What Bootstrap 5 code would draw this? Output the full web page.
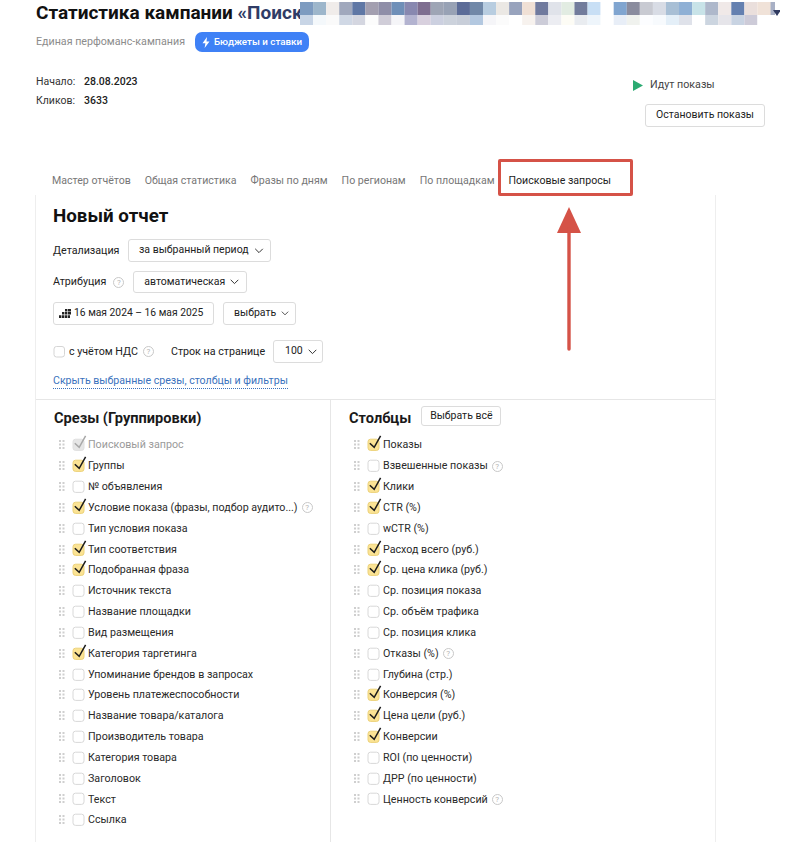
<!DOCTYPE html>
<html lang="ru">
<head>
<meta charset="utf-8">
<title>Статистика кампании</title>
<link rel="stylesheet" href="https://cdn.jsdelivr.net/npm/bootstrap@5.3.0/dist/css/bootstrap.min.css">
<style>
html,body{height:842px;overflow:hidden;background:#fff}
body{font-family:Roboto,"Liberation Sans",sans-serif;font-size:10.7px;color:#222;line-height:1.3}
.sheet{position:relative;width:810px;height:842px;overflow:hidden;padding-left:36px}
.camp-title{font-size:19px;font-weight:700;line-height:26px;height:26px;color:#111;white-space:nowrap;width:741px}
.camp-title .quoted{color:#2f3c66}
.mosaic{position:absolute;left:300px;top:0;width:480px;height:25px;display:block}
.sub-line{margin-top:6px;height:20px}
.sub-text{color:#8c8c8c;width:159px;font-size:10.7px}
.pill{background:#3f81f6;color:#fff;border:0;border-radius:7px;height:20px;width:114px;font-size:9.8px;font-weight:500;padding:0}
.pill:hover{background:#3f81f6;color:#fff}
.info-row{height:19px;line-height:19px;font-size:10.5px}
.info-key{width:48px;color:#333}
.info-val{font-weight:500;color:#222}
.head-zone{margin-top:20px;width:729px}
.status-line{margin-top:4px;height:18px;line-height:18px;color:#444;width:132px;gap:7px}
.ya-btn{background:#fff;border:1px solid #dcdcdc;border-radius:3px;color:#222;font-size:10.5px;line-height:1;padding:0;height:23px;display:inline-flex;align-items:center;justify-content:center;gap:5px;white-space:nowrap}
.ya-btn:hover{background:#fff;border-color:#dcdcdc;color:#222}
.chev{justify-content:flex-start;padding-left:10px}
.stop-btn{width:120px;margin-top:10px}
.tabbar{margin-top:45px;height:18px;line-height:18px;padding-left:16px;gap:14px;white-space:nowrap}
.tab-item{color:#777;font-size:10.6px}
.tab-on{position:relative;color:#222}
.tab-on::after{content:"";position:absolute;left:-11px;right:-22px;top:-13px;height:37px;border:3px solid #d55247;border-radius:2px}
.arrow-mark{position:absolute;left:552px;top:205px;overflow:visible}
.panel{margin-left:-1px;width:681px;height:651px;margin-top:5px;border-left:1px solid #eee;border-right:1px solid #eee}
.top-form{height:205px;padding:9px 0 0 17px;border-bottom:1px solid #e6e6e6}
.form-title{font-size:18.8px;font-weight:700;line-height:24px;margin:0;color:#111}
.r1{margin-top:11px}.r2{margin-top:9px}.r3{margin-top:9px}.r4{margin-top:15px}
.r1{gap:8px}.r2,.r3{gap:9px}
.w-det{width:143px}.w-atr{width:114px;height:22px}.w-date{width:161px;justify-content:flex-start;padding-left:5px;gap:3px;font-size:10.3px}.w-pick{width:73px}.w-num{width:50px;padding-left:11px}
.lbl-det{width:67px}
.lbl-atr{gap:7px}
.qmark{display:inline-block;width:11px;height:11px;border:1px solid #c8c8c8;border-radius:50%;color:#b5b5b5;font-size:8px;line-height:9px;text-align:center;flex:none}
.lbl-ndc{gap:5px;margin-right:17px}
.lbl-rows{margin-right:8px}
.hide-link{display:inline-block;margin-top:10px;line-height:15px;font-size:10.6px;color:#3a72bd;text-decoration:none;border-bottom:1px dotted #3a72bd}
.lower{height:445px}
.col-left{width:295px;border-right:1px solid #e6e6e6}
.col-right{width:384px}
.col-head{height:20px;margin-top:6px;padding-left:18px;gap:10px}
.col-title{font-size:14.6px;font-weight:700;color:#1a1a1a;margin:4px 0 0;line-height:20px}
.pick-all{width:80px;height:20px}
.items{margin:9px 0 0;padding:0 0 0 23px;list-style:none}
.items li{height:20.83px;display:flex;align-items:center;white-space:nowrap;color:#2a2a2a}
.items li.off-text{color:#9a9a9a}
.grip{width:13px;height:10px;flex:none}
.tick{width:16px;height:16px;flex:none;overflow:visible}
.items .qmark{margin-left:4px}
</style>
</head>
<body>
<svg width="0" height="0" class="d-none">
<symbol id="grip" viewBox="0 0 13 10"><g fill="#cfcfcf"><rect x="0" y="0" width="2" height="2"/><rect x="3.5" y="0" width="2" height="2"/><rect x="0" y="3.5" width="2" height="2"/><rect x="3.5" y="3.5" width="2" height="2"/><rect x="0" y="7" width="2" height="2"/><rect x="3.5" y="7" width="2" height="2"/></g></symbol>
</svg>
<div class="sheet">
  <div class="camp-title d-flex">
    <span>Статистика кампании <span class="quoted">«Поиск</span></span>
  </div>
  <svg class="mosaic" viewBox="0 0 480 25" aria-hidden="true">
    <g id="m1"></g>
    <path d="M473 10h8l-4 6z" fill="#2f3a60"/>
  </svg>
  <div class="sub-line d-flex align-items-center">
    <span class="sub-text">Единая перфоманс-кампания</span>
    <button class="pill btn d-inline-flex align-items-center justify-content-center gap-1" type="button">
      <svg width="8" height="11" viewBox="0 0 8 11"><path d="M5 0L0.5 6.3H3.4L2.6 11L7.5 4.4H4.5Z" fill="#fff"/></svg>Бюджеты и ставки</button>
  </div>
  <div class="head-zone d-flex justify-content-between">
    <div>
      <div class="info-row d-flex"><span class="info-key">Начало:</span><span class="info-val">28.08.2023</span></div>
      <div class="info-row d-flex"><span class="info-key">Кликов:</span><span class="info-val">3633</span></div>
    </div>
    <div class="d-flex flex-column align-items-end">
      <div class="status-line d-flex align-items-center">
        <svg width="10" height="11" viewBox="0 0 10 11"><path d="M0 0L10 5.5L0 11Z" fill="#2bab72"/></svg>Идут показы</div>
      <button class="ya-btn stop-btn btn" type="button">Остановить показы</button>
    </div>
  </div>
  <nav class="tabbar d-flex">
    <span class="tab-item">Мастер отчётов</span>
    <span class="tab-item">Общая статистика</span>
    <span class="tab-item">Фразы по дням</span>
    <span class="tab-item">По регионам</span>
    <span class="tab-item">По площадкам</span>
    <span class="tab-item tab-on">Поисковые запросы</span>
  </nav>
  <svg class="arrow-mark" width="34" height="150" viewBox="0 0 34 150" aria-hidden="true">
    <path d="M17 2L29 28H5Z" fill="#d55247"/>
    <path d="M17 24V144" stroke="#d55247" stroke-width="3.4" stroke-linecap="round"/>
  </svg>
  <section class="panel">
    <div class="top-form">
      <h2 class="form-title">Новый отчет</h2>
      <div class="r1 d-flex align-items-center">
        <span class="lbl-det">Детализация</span>
        <button class="ya-btn chev w-det btn" type="button">за выбранный период <svg width="10" height="6" viewBox="0 0 9 6"><path d="M.7 .8L4.5 4.6L8.3 .8" fill="none" stroke="#333"/></svg></button>
      </div>
      <div class="r2 d-flex align-items-center">
        <span class="lbl-atr d-inline-flex align-items-center">Атрибуция <span class="qmark">?</span></span>
        <button class="ya-btn chev w-atr btn" type="button">автоматическая <svg width="9" height="6" viewBox="0 0 9 6"><path d="M.7 .8L4.5 4.6L8.3 .8" fill="none" stroke="#333"/></svg></button>
      </div>
      <div class="r3 d-flex align-items-center">
        <button class="ya-btn w-date btn" type="button"><svg width="12" height="9" viewBox="0 0 12 9"><path fill="#222" d="M6 0h2.4v2.4H6zM9 0h3v2.4H9zM3 3h2.4v2.6H3zM6 3h2.4v2.6H6zM9 3h3v2.6H9zM0 6.2h2.4V9H0zM3 6.2h2.4V9H3zM6 6.2h2.4V9H6zM9 6.2h2V9H9z"/></svg>16 мая 2024 – 16 мая 2025</button>
        <button class="ya-btn chev w-pick btn" type="button">выбрать <svg width="8" height="5" viewBox="0 0 9 6"><path d="M.7 .8L4.5 4.6L8.3 .8" fill="none" stroke="#333"/></svg></button>
      </div>
      <div class="r4 d-flex align-items-center">
        <svg class="tick" viewBox="0 0 16 16"><rect x="1" y="2.5" width="10.5" height="10.5" rx="2.5" fill="#fff" stroke="#d5d5d5"/></svg>
        <span class="lbl-ndc d-inline-flex align-items-center">с учётом НДС <span class="qmark">?</span></span>
        <span class="lbl-rows">Строк на странице</span>
        <button class="ya-btn chev w-num btn" type="button">100 <svg width="9" height="6" viewBox="0 0 9 6"><path d="M.7 .8L4.5 4.6L8.3 .8" fill="none" stroke="#333"/></svg></button>
      </div>
      <a class="hide-link" href="#">Скрыть выбранные срезы, столбцы и фильтры</a>
    </div>
    <div class="lower d-flex">
      <div class="col-left">
        <div class="col-head d-flex align-items-center"><h3 class="col-title">Срезы (Группировки)</h3></div>
        <ul class="items" data-list="l"></ul>
      </div>
      <div class="col-right">
        <div class="col-head d-flex align-items-center"><h3 class="col-title">Столбцы</h3><button class="ya-btn pick-all btn" type="button">Выбрать всё</button></div>
        <ul class="items" data-list="r"></ul>
      </div>
    </div>
  </section>
</div>
<script>
var rows=[["#7d9bc0","#9db6cb","#f0ecea","#a0a8bd","#5f77a5","#a39fb0","#8f8ea8","#6f8fb8","#8888b0","#7e6e90","#9ea5b5","#98a2b5","#5c6c98","#7088a8","#b8cde0","#ebe8e4","#98a3bd","#f0e0d5","#707a9e","#e0e3ea","#e2ece2","#727c9c","#c8dff5","#ffffff","#80a5d0","#8a8c9e","#c8cad2","#d8dce5","#a8bfd5","#8fb0d5","#c8e3e8","#aeb8cb","#f0e9e8","#6480b0","#eadfdc","#f0e2d8"],
["#c8d5e6","#f4f8fb","#fafafa","#d0d8e5","#d4d6e0","#fcfcfc","#d0cdd8","#f5f5f8","#b3b3d0","#d8d0de","#ccd0e0","#ccd2dc","#c8ced9","#b3c8e0","#f5f5f8","#fbfbfb","#ffffff","#f7f2ee","#ccccd8","#ecedf2","#fdfcf5","#e9ecf0","#eef5fb","#ffffff","#e8eef7","#f0f2ee","#fcfdff","#f7fafd","#e4eff8","#dfe2ea","#ffffff","#ccd5e0","#e6e5ea","#c8d3e2","#cdcbd8","#ffffff"]];
var NS="http://www.w3.org/2000/svg",g=document.getElementById("m1");
rows.forEach(function(row,ri){row.forEach(function(c,i){var r=document.createElementNS(NS,"rect");r.setAttribute("x",i*13.07);r.setAttribute("y",ri?15:2);r.setAttribute("width",13.1);r.setAttribute("height",ri?10:13);r.setAttribute("fill",c);g.appendChild(r);});});
var r=document.createElementNS(NS,"rect");r.setAttribute("x",470);r.setAttribute("y",2);r.setAttribute("width",5);r.setAttribute("height",13);r.setAttribute("fill","#a8b0c5");g.insertBefore(r,g.firstChild);
var L=[["Поисковый запрос",2],["Группы",1],["№ объявления",0],["Условие показа (фразы, подбор аудито...)",1,1],["Тип условия показа",0],["Тип соответствия",1],["Подобранная фраза",1],["Источник текста",0],["Название площадки",0],["Вид размещения",0],["Категория таргетинга",1],["Упоминание брендов в запросах",0],["Уровень платежеспособности",0],["Название товара/каталога",0],["Производитель товара",0],["Категория товара",0],["Заголовок",0],["Текст",0],["Ссылка",0]];
var R=[["Показы",1],["Взвешенные показы",0,1],["Клики",1],["CTR (%)",1],["wCTR (%)",0],["Расход всего (руб.)",1],["Ср. цена клика (руб.)",1],["Ср. позиция показа",0],["Ср. объём трафика",0],["Ср. позиция клика",0],["Отказы (%)",0,1],["Глубина (стр.)",0],["Конверсия (%)",1],["Цена цели (руб.)",1],["Конверсии",1],["ROI (по ценности)",0],["ДРР (по ценности)",0],["Ценность конверсий",0,1]];
function tick(s){var fill=s==1?"#fbe394":s==2?"#e6e6e6":"#fff",st=s==1?"#ecd27a":s==2?"#e0e0e0":"#d8d8d8",p=s?'<path d="M2.8 6.2L7.2 10.4L13.6 -1.2" fill="none" stroke="'+(s==2?"#a8a8a8":"#1c1c1c")+'" stroke-width="1.5"/>':"";return '<svg class="tick" viewBox="0 0 16 16"><rect x="1" y="2.2" width="11" height="11.2" rx="2.5" fill="'+fill+'" stroke="'+st+'"/>'+p+'</svg>';}
function fill(k,data){document.querySelector('[data-list="'+k+'"]').innerHTML=data.map(function(d){return '<li'+(d[1]==2?' class="off-text"':'')+'><svg class="grip"><use href="#grip"/></svg>'+tick(d[1])+'<span>'+d[0]+'</span>'+(d[2]?'<span class="qmark">?</span>':'')+'</li>';}).join("");}
fill("l",L);fill("r",R);
</script>
<script src="https://cdn.jsdelivr.net/npm/bootstrap@5.3.0/dist/js/bootstrap.bundle.min.js"></script>
</body>
</html>
